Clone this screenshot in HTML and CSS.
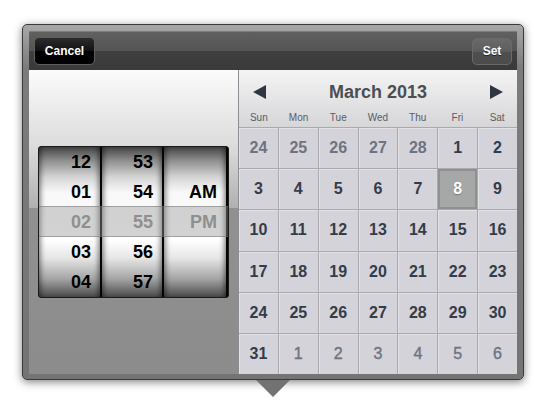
FILE: index.html
```html
<!DOCTYPE html>
<html lang="en">
<head>
    <meta charset="UTF-8">
    <title>Date Picker</title>
    <link rel="stylesheet" href="styles.css">
</head>
<body>
    <div class="popup">
        <div class="toolbar">
            <button class="btn btn-cancel">Cancel</button>
            <button class="btn btn-set">Set</button>
        </div>
        <div class="content">
            <div class="time-panel">
                <div class="picker">
                    <div class="wheel">
                        <span>12</span><span>01</span><span class="sel">02</span><span>03</span><span>04</span>
                    </div>
                    <div class="wheel">
                        <span>53</span><span>54</span><span class="sel">55</span><span>56</span><span>57</span>
                    </div>
                    <div class="wheel">
                        <span></span><span>AM</span><span class="sel">PM</span><span></span><span></span>
                    </div>
                    <div class="band"></div>
                </div>
            </div>
            <div class="calendar">
                <div class="cal-head">
                    <div class="month-nav">
                        <span class="arrow arrow-prev"></span>
                        <span class="month">March 2013</span>
                        <span class="arrow arrow-next"></span>
                    </div>
                    <div class="weekdays">
                        <span>Sun</span><span>Mon</span><span>Tue</span><span>Wed</span><span>Thu</span><span>Fri</span><span>Sat</span>
                    </div>
                </div>
                <div class="days">
                    <div class="day prev">24</div><div class="day prev">25</div><div class="day prev">26</div><div class="day prev">27</div><div class="day prev">28</div><div class="day">1</div><div class="day">2</div>
                    <div class="day">3</div><div class="day">4</div><div class="day">5</div><div class="day">6</div><div class="day">7</div><div class="day today">8</div><div class="day">9</div>
                    <div class="day">10</div><div class="day">11</div><div class="day">12</div><div class="day">13</div><div class="day">14</div><div class="day">15</div><div class="day">16</div>
                    <div class="day">17</div><div class="day">18</div><div class="day">19</div><div class="day">20</div><div class="day">21</div><div class="day">22</div><div class="day">23</div>
                    <div class="day">24</div><div class="day">25</div><div class="day">26</div><div class="day">27</div><div class="day">28</div><div class="day">29</div><div class="day">30</div>
                    <div class="day">31</div><div class="day next">1</div><div class="day next">2</div><div class="day next">3</div><div class="day next">4</div><div class="day next">5</div><div class="day next">6</div>
                </div>
            </div>
        </div>
    </div>
    <div class="pointer"></div>
</body>
</html>
```

FILE: styles.css
```css
body {
    margin: 0;
    background-color: #ffffff;
    font-family: "Liberation Sans", Arial, sans-serif;
}

.popup {
    width: 488px;
    margin: 24px 0 0 22px;
    padding: 6px 6px 5px 6px;
    border: 1px solid #3a3a3a;
    border-radius: 5px;
    background: linear-gradient(#a8a8a8, #7c7c7c 12%, #747474);
    box-shadow: 0 2px 9px rgba(0, 0, 0, 0.5);
}

.pointer {
    width: 34px;
    height: 17px;
    margin-left: 256px;
    background-color: #727272;
    clip-path: polygon(0 0, 100% 0, 50% 100%);
}

.toolbar {
    height: 39px;
    display: flex;
    justify-content: space-between;
    align-items: center;
    padding: 0 5px;
    box-sizing: border-box;
    border-top: 1px solid #7e7e7e;
    background: linear-gradient(#606060 0%, #545454 50%, #3f3f3f 50%, #3a3a3a 100%);
}

.btn {
    font-family: "Liberation Sans", Arial, sans-serif;
    font-size: 12px;
    font-weight: bold;
    color: #ffffff;
    border-radius: 5px;
    padding: 0;
    cursor: pointer;
    text-shadow: 0 1px 0 rgba(0, 0, 0, 0.6);
}

.btn-cancel {
    width: 61px;
    height: 28px;
    border: 1px solid #5e5e5e;
    background: linear-gradient(#2c2c2c 0%, #111111 50%, #000000 51%, #000000 100%);
}

.btn-set {
    width: 40px;
    height: 27px;
    border: 1px solid #6a6a6a;
    background: linear-gradient(#6a6a6a 0%, #5d5d5d 50%, #4e4e4e 51%, #4c4c4c 100%);
}

.content {
    display: flex;
    height: 304px;
}

.time-panel {
    width: 209px;
    display: flex;
    justify-content: center;
    align-items: center;
    background: linear-gradient(#fbfbfb 0%, #dcdcdc 25%, #b0b0b0 45.4%, #919191 45.4%, #8c8c8c 100%);
}

.picker {
    position: relative;
    width: 189px;
    height: 150px;
    display: grid;
    grid-template-columns: 61px 60px 62px;
    column-gap: 2px;
    border: 1px solid #1a1a1a;
    border-radius: 3px;
    background-color: #050505;
    overflow: hidden;
}

.wheel {
    display: flex;
    flex-direction: column;
    background: linear-gradient(#444444 0%, #8e8e8e 9%, #d4d4d4 20%, #f8f8f8 30%, #ffffff 62%, #e6e6e6 74%, #a4a4a4 88%, #4a4a4a 100%);
    box-shadow: inset 5px 0 5px -3px rgba(0, 0, 0, 0.45), inset -5px 0 5px -3px rgba(0, 0, 0, 0.45);
}

.wheel span {
    height: 30px;
    line-height: 30px;
    text-align: right;
    padding-right: 9px;
    font-size: 18px;
    font-weight: bold;
    color: #000000;
}

.wheel span.sel {
    color: #8a8a8a;
}

.band {
    position: absolute;
    left: 0;
    right: 0;
    top: 59px;
    height: 29px;
    background-color: rgba(150, 150, 150, 0.42);
    border-top: 1px solid rgba(110, 110, 110, 0.5);
    border-bottom: 1px solid rgba(110, 110, 110, 0.5);
}

.calendar {
    width: 278px;
    border-left: 1px solid #8d8d93;
    display: flex;
    flex-direction: column;
}

.cal-head {
    height: 57px;
    background: linear-gradient(#f4f4f4, #d6d6d8);
}

.month-nav {
    height: 42px;
    display: flex;
    justify-content: space-between;
    align-items: center;
    padding: 2px 14px 0 14px;
    box-sizing: border-box;
}

.month {
    font-size: 18px;
    font-weight: bold;
    color: #4c4e56;
}

.arrow {
    width: 0;
    height: 0;
    border-top: 7px solid transparent;
    border-bottom: 7px solid transparent;
}

.arrow-prev {
    border-right: 13px solid #2f3642;
}

.arrow-next {
    border-left: 13px solid #2f3642;
}

.weekdays {
    display: grid;
    grid-template-columns: repeat(7, 1fr);
    height: 15px;
    line-height: 12px;
    font-size: 10px;
    color: #5a5b63;
    text-align: center;
}

.days {
    flex: 1;
    display: grid;
    grid-template-columns: repeat(7, 1fr);
    grid-template-rows: repeat(6, 1fr);
    gap: 1px;
    padding: 1px 0 0 0;
    background-color: #a9a9ae;
}

.day {
    display: flex;
    justify-content: center;
    align-items: center;
    background-color: #d4d3d9;
    box-shadow: inset 1px 1px 0 #e2e1e6;
    font-size: 16px;
    font-weight: bold;
    color: #343c49;
}

.day.prev {
    color: #6e737e;
}

.day.next {
    color: #6f7480;
    font-weight: normal;
    -webkit-text-stroke: 0.4px #6f7480;
}

.day.today {
    background-color: #a6a7a7;
    box-shadow: inset 0 0 0 2px #8f9090;
    color: #ffffff;
    text-shadow: 0 1px 1px rgba(0, 0, 0, 0.3);
}
```
